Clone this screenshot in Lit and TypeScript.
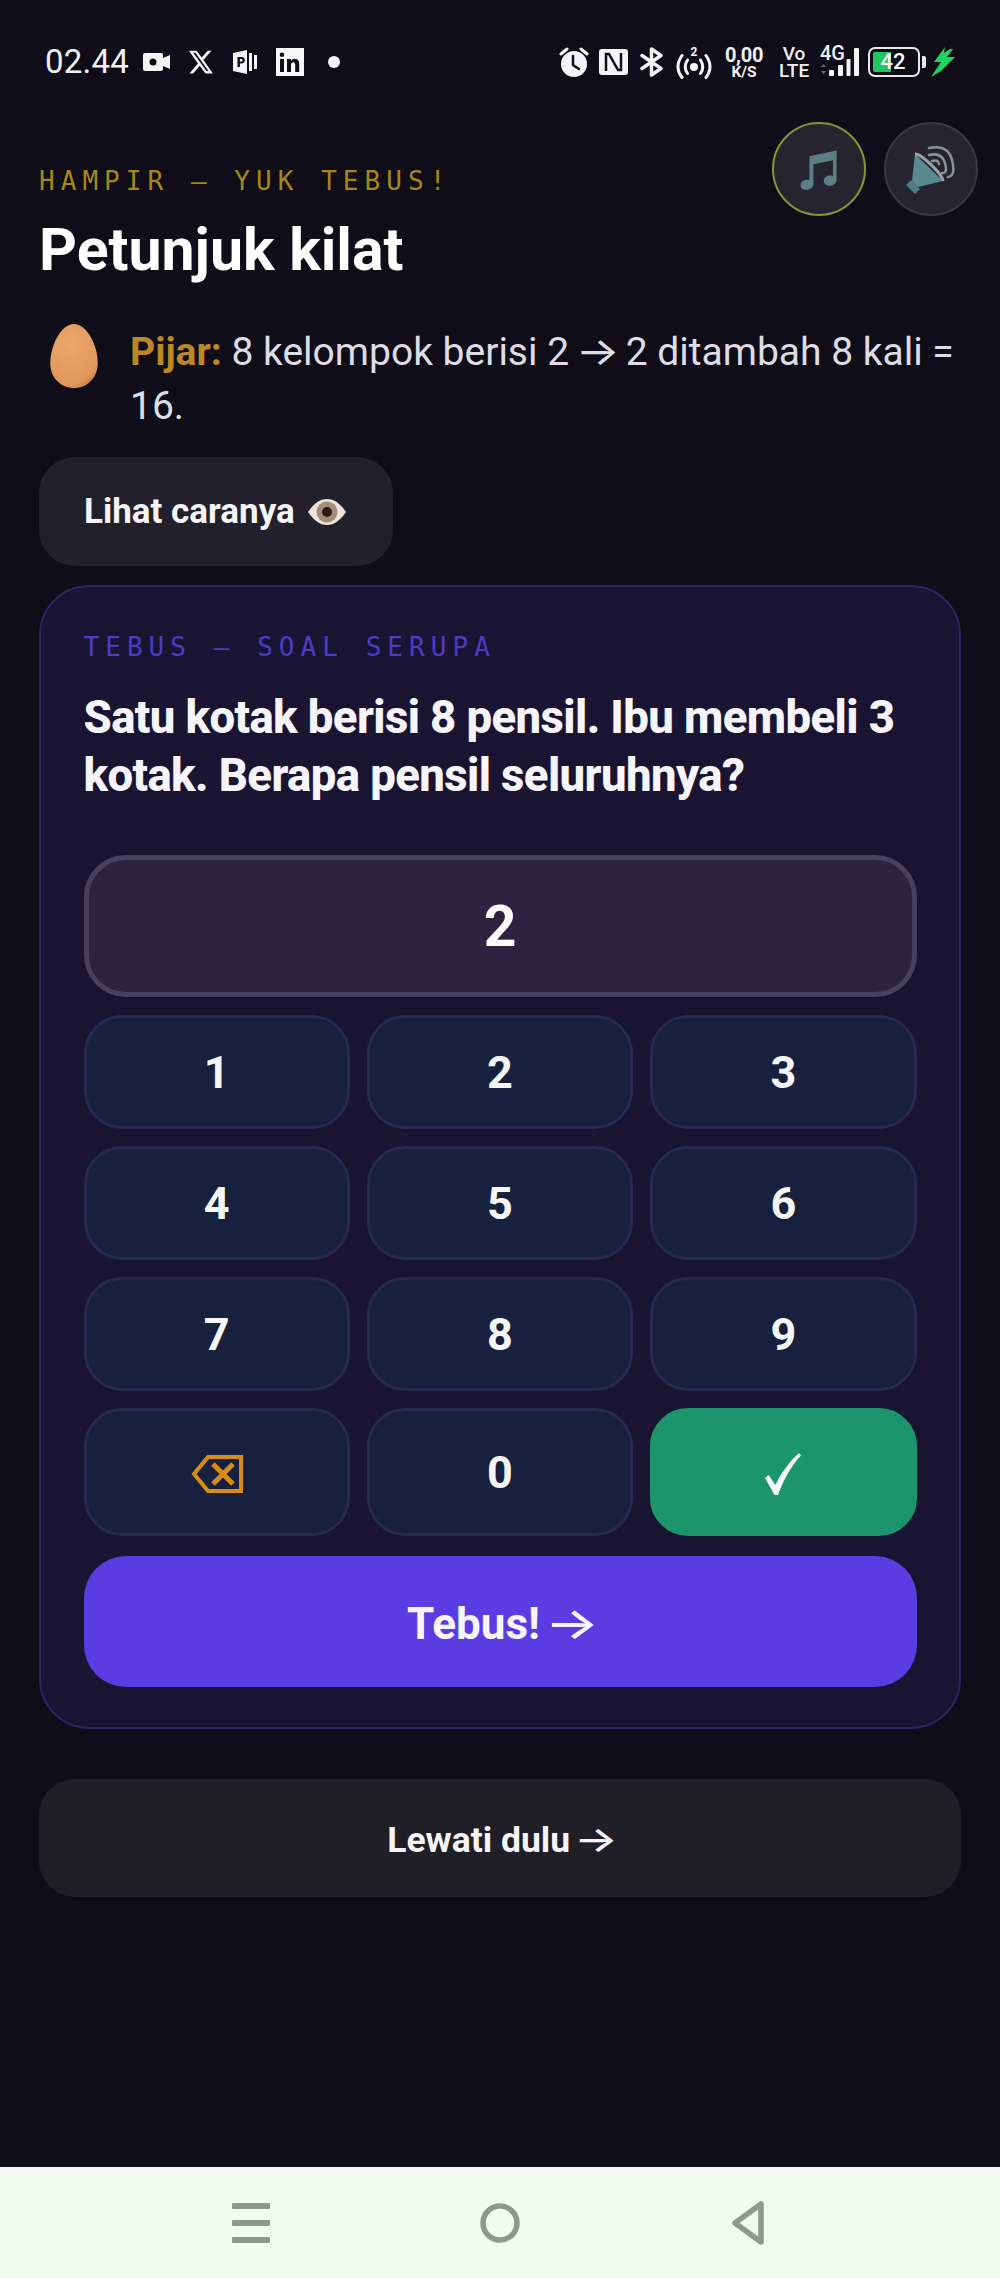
import { LitElement, html, css, svg } from "lit";
import { customElement } from "lit/decorators.js";

@customElement("app-root")
export class AppRoot extends LitElement {
  static styles = css`
    :host { display: flex; flex-direction: column; width: 1000px; height: 2278px; background: #0e0d18; font-family: Roboto, "Liberation Sans", sans-serif; color: #fff; position: relative; overflow: hidden; }
    * { box-sizing: border-box; }
    .status { height: 44px; margin-top: 40px; padding: 0 45px; display: flex; justify-content: space-between; align-items: center; flex: none; }
    .left, .right { display: flex; align-items: center; }
    .time { font-size: 33px; letter-spacing: 0.2px; color: #f1f1f5; margin-right: 14px; line-height: 44px; }
    .left svg, .right svg { display: block; flex: none; }
    .ml19 { margin-left: 19px; } .ml18 { margin-left: 18px; } .ml24 { margin-left: 24px; }
    .ml10 { margin-left: 10px; } .ml12 { margin-left: 12px; } .ml13 { margin-left: 13px; } .ml17 { margin-left: 17px; } .ml9 { margin-left: 9px; } .ml5 { margin-left: 5px; }
    .stack { display: flex; flex-direction: column; align-items: center; font-weight: 700; color: #f0f0f4; }
    .speed { width: 36px; line-height: 1; }
    .speed b { font-size: 20px; line-height: 20px; font-weight: 700; letter-spacing: -0.3px; }
    .speed span { font-size: 15.5px; line-height: 14px; }
    .volte { width: 30px; font-size: 19px; line-height: 17px; font-weight: 500; }
    .net { position: relative; width: 40px; height: 32px; }
    .net span { position: absolute; left: 1px; top: -2px; font-size: 20px; line-height: 18px; font-weight: 500; color: #f0f0f4; }
    .battery { width: 58px; height: 30px; display: flex; align-items: center; }
    .cell { position: relative; width: 52px; height: 30px; border: 2.5px solid #e8e8ea; border-radius: 7px; overflow: hidden; display: flex; align-items: center; justify-content: center; }
    .fill { position: absolute; left: 3px; top: 3px; bottom: 3px; width: 18px; background: #22c55e; border-radius: 2px 0 0 2px; }
    .level { position: relative; font-size: 22px; line-height: 1; font-weight: 500; padding-right: 2px; }
    .nub { width: 4px; height: 12px; margin-left: 2px; background: #e8e8ea; border-radius: 0 2px 2px 0; }

    .main { flex: 1; padding: 0 39px; display: flex; flex-direction: column; }
    .eyebrow { font-family: "DejaVu Sans Mono", monospace; text-transform: uppercase; font-size: 26px; letter-spacing: 6.05px; line-height: 32px; }
    .gold { color: #a8871a; margin-top: 81px; }
    h1 { margin: 21px 0 0; font-size: 59px; line-height: 64px; font-weight: 700; }
    .hint { display: flex; margin-top: 42px; gap: 32px; align-items: flex-start; padding-left: 11px; }
    .hint svg { flex: none; }
    .hint p { margin: 0; font-size: 39px; line-height: 54px; color: #dedde6; }
    .hint strong { color: #bd8823; font-weight: 700; }
    .ghost { align-self: flex-start; margin-top: 24px; height: 109px; width: 354px; padding-left: 45px; display: flex; align-items: center; gap: 12px; background: #22212b; border-radius: 36px; font-size: 35px; font-weight: 700; color: #f5f5f7; }
    .card { margin-top: 19px; height: 1144px; flex: none; background: #1a1433; border: 2.5px solid #2c2463; border-radius: 50px; padding: 0 42.5px; display: flex; flex-direction: column; }
    .purple { margin-top: 44px; color: #4b3cc4; }
    .q { margin: 26px 0 0; font-size: 45.5px; line-height: 58px; font-weight: 800; letter-spacing: -0.6px; color: #f6f5fb; }
    .display { margin-top: 50px; height: 142px; border: 5px solid #47405f; background: #2b2340; border-radius: 42px; display: flex; align-items: center; justify-content: center; font-size: 57px; font-weight: 700; flex: none; }
    .keys { display: grid; grid-template-columns: repeat(3, 1fr); grid-template-rows: 114px 114px 114px 128px; gap: 17px; margin-top: 18px; }
    .key { display: flex; align-items: center; justify-content: center; background: #17203c; border: 3px solid #272a4e; border-radius: 38px; font-size: 45px; font-weight: 700; color: #f6f6f9; }
    .key svg { margin-top: 4px; }
    .ok { background: #1d956c; border-color: #1d956c; }
    .submit { margin-top: 20px; padding-top: 3px; height: 131px; flex: none; background: #5a3de2; border-radius: 42px; display: flex; align-items: center; justify-content: center; font-size: 44px; font-weight: 700; color: #f7f5ff; }
    .skip { margin-top: 50px; padding-top: 2px; height: 118px; flex: none; background: #201f27; border-radius: 36px; display: flex; align-items: center; justify-content: center; font-size: 35.5px; font-weight: 700; color: #f5f5f7; }
    .arrow { display: inline-block; font-family: Inter, sans-serif; font-weight: 500; transform: scaleX(1.3); }
    .hint .arrow { font-weight: 400; transform: scaleX(1.18); }

    .audio { position: absolute; top: 122px; right: 22px; display: flex; gap: 18px; }
    .round { width: 94px; height: 94px; border-radius: 50%; background: #26252f; border: 2.5px solid #3a3943; display: flex; align-items: center; justify-content: center; }
    .round.on { border-color: #8d9138; }

    .nav { height: 111px; flex: none; background: #f0fdee; border-top: 10px solid #f5f7f0; margin-top: -1px; }
    .navitems { padding: 0 0 10px 232px; display: flex; align-items: center; height: 100%; }
    .navitems svg { display: block; flex: none; }
    .gap1 { margin-left: 210px; } .gap2 { margin-left: 211px; }
  `;

  private statusLeft() {
    return html`<div class="left">
      <span class="time">02.44</span>
      <svg width="27" height="20" viewBox="0 0 27 20"><path fill="#f4f4f6" fill-rule="evenodd" d="M2 1h16a2 2 0 0 1 2 2v3l7-3v14l-7-3v3a2 2 0 0 1-2 2H2a2 2 0 0 1-2-2V3a2 2 0 0 1 2-2zm8 5.500a3.500 3.500 0 1 0 0 7 3.500 3.500 0 0 0 0-7z"/></svg>
      <svg class="ml18" width="26" height="26" viewBox="0 0 24 24"><path fill="#f4f4f6" d="M18.200 1.500h3.400l-7.400 8.600L23 22.500h-6.800l-5.400-7-6.100 7H1.300l7.900-9.100L.9 1.500h7l4.800 6.400zM17 20.400h1.900L6.800 3.500h-2z"/></svg>
      <svg class="ml18" width="26" height="24" viewBox="0 0 26 24"><path fill="#f4f4f6" fill-rule="evenodd" d="M1 3l14-3v24L1 21zm4.500 4v10h2.400v-3.500h1.600c2 0 3.300-1.300 3.300-3.300S11.500 7 9.500 7zm2.400 2h1.300c.8 0 1.300.5 1.300 1.200s-.5 1.300-1.300 1.300H7.900z"/><rect x="17" y="3" width="3" height="18" fill="#f4f4f6"/><rect x="22" y="5" width="3" height="14" fill="#f4f4f6"/></svg>
      <svg class="ml18" width="28" height="28" viewBox="0 0 28 28"><path fill="#f8f8fa" fill-rule="evenodd" d="M0 0h28v28H0zm4 11v13h4V11zm2-6.500a2.300 2.300 0 1 0 0 4.600 2.300 2.300 0 0 0 0-4.600zM11 11v13h4v-7c0-1.800 1-2.700 2.200-2.700s2 .9 2 2.700v7h4v-8c0-3.400-1.900-5.300-4.500-5.300-1.600 0-3 .8-3.700 2V11z"/></svg>
      <svg class="ml24" width="12" height="12" viewBox="0 0 12 12"><circle cx="6" cy="6" r="6" fill="#f4f4f6"/></svg>
    </div>`;
  }

  private statusRight() {
    return html`<div class="right">
      <svg width="30" height="31" viewBox="0 0 30 31"><path fill="none" stroke="#f4f4f6" stroke-width="3" stroke-linecap="round" d="M2 7l6-5M28 7l-6-5"/><circle cx="15" cy="17" r="13" fill="#f4f4f6"/><path fill="none" stroke="#0e0d18" stroke-width="2.500" stroke-linecap="round" d="M14 9v9l6 4"/></svg>
      <svg class="ml10" width="29" height="26" viewBox="0 0 29 26"><rect width="29" height="26" rx="3" fill="#f4f4f6"/><path fill="none" stroke="#0e0d18" stroke-width="2.500" d="M7 22V5h3l9 16h3V4"/></svg>
      <svg class="ml12" width="23" height="30" viewBox="0 0 23 30"><path fill="none" stroke="#f4f4f6" stroke-width="3.500" stroke-linejoin="round" stroke-linecap="round" d="M2 8.500l19 13-9.500 6.500V2L21 8.500l-19 13"/></svg>
      <svg class="ml12" width="38" height="33" viewBox="0 0 38 33"><g fill="none" stroke="#f4f4f6" stroke-width="3" stroke-linecap="round"><path d="M7 9.500Q-1 21 7 31.500M31 9.500Q39 21 31 31.500M12.500 14Q8 21 12.500 27.500M25.500 14Q30 21 25.500 27.500"/></g><circle cx="19" cy="21" r="4" fill="#f4f4f6"/><text x="19" y="10" text-anchor="middle" font-family="Roboto" font-size="12" font-weight="700" fill="#f4f4f6">2</text></svg>
      <div class="stack speed ml13"><b>0,00</b><span>K/S</span></div>
      <div class="stack volte ml17"><span>Vo</span><span>LTE</span></div>
      <div class="net ml10"><span>4G</span>
        <svg width="40" height="32" viewBox="0 0 40 32"><path fill="#6a6a72" d="M2 21l2.500-3 2.500 3zM2 25l2.500 3 2.500-3z"/><g fill="#f4f4f6"><rect x="10" y="24" width="5" height="6" rx="1"/><rect x="19" y="19" width="5" height="11" rx="1"/><rect x="27.500" y="13" width="4" height="17" rx="1"/><rect x="35" y="2" width="5" height="28" rx="1"/></g></svg>
      </div>
      <div class="battery ml9"><div class="cell"><div class="fill"></div><span class="level">42</span></div><div class="nub"></div></div>
      <svg class="ml5" width="24" height="30" viewBox="0 0 24 30"><path fill="#22d45f" d="M14 0L3 15h7L0 30l10-6 14-14h-8l6-8h-3l-6 4z"/></svg>
    </div>`;
  }

  private egg() {
    return svg`<svg width="48" height="64" viewBox="0 0 46 62"><defs><radialGradient id="eg" cx="0.42" cy="0.3" r="0.8"><stop offset="0" stop-color="#eca76b"/><stop offset="0.8" stop-color="#e0985a"/><stop offset="1" stop-color="#b96f35"/></radialGradient></defs><path fill="url(#eg)" d="M23 0C35 0 46 20 46 38 46 52 36 62 23 62S0 52 0 38C0 20 11 0 23 0z"/></svg>`;
  }

  private eye() {
    return svg`<svg width="40" height="30" viewBox="0 0 40 30"><path fill="#ece6df" d="M1 15C8 5 14 2 20 2s12 3 19 13c-7 10-13 13-19 13S8 25 1 15z"/><circle cx="20" cy="15" r="10.500" fill="#a58c79"/><circle cx="20" cy="15" r="5" fill="#2c1d14"/></svg>`;
  }

  render() {
    return html`
      <div class="status">${this.statusLeft()}${this.statusRight()}</div>
      <div class="audio">
        <div class="round on">
          <svg width="40" height="46" viewBox="0 0 50 52"><path fill="#5b7f83" d="M13 10L47 3v36c0 5-4.500 8-9 8s-7-3-7-6.500 3.500-6.500 8-6.500c1.500 0 2.500.2 3.500.6V15L18 20v25c0 4.500-4.500 7-9 7s-7-2.500-7-6 3.500-6.500 8-6.500c1 0 2 .1 3 .5z"/></svg>
        </div>
        <div class="round">
          <svg width="52" height="52" viewBox="0 0 52 52"><g fill="none" stroke="#8b9298" stroke-width="2.500" stroke-linecap="round"><path d="M24 12Q37 9 40 20T37 30"/><path d="M24 5Q43 1 47 17T43 34"/><path d="M27 18Q33 16 34 21"/></g><path fill="#5a8a90" d="M10 11L38 38 13 44 7 38z"/><path fill="#4c7f86" d="M6 37l9 9-5 5-9-9z"/><path fill="none" stroke="#98a4a8" stroke-width="3" d="M10 11C16 10 38 32 38 38"/></svg>
        </div>
      </div>
      <main class="main">
        <div class="eyebrow gold">Hampir — yuk tebus!</div>
        <h1>Petunjuk kilat</h1>
        <div class="hint">
          ${this.egg()}
          <p><strong>Pijar:</strong> 8 kelompok berisi 2 <span class="arrow">→</span> 2 ditambah 8 kali = 16.</p>
        </div>
        <div class="ghost"><span>Lihat caranya</span>${this.eye()}</div>
        <section class="card">
          <div class="eyebrow purple">Tebus — soal serupa</div>
          <p class="q">Satu kotak berisi 8 pensil. Ibu membeli 3 kotak. Berapa pensil seluruhnya?</p>
          <div class="display">2</div>
          <div class="keys">
            ${["1", "2", "3", "4", "5", "6", "7", "8", "9"].map((k) => html`<div class="key">${k}</div>`)}
            <div class="key"><svg width="52" height="38" viewBox="0 0 52 38"><g fill="none" stroke="#d98c15" stroke-width="4"><path d="M50 2H17L3 19l14 17h33z"/><path d="M22 9l20 20M42 9L22 29" stroke-width="5"/></g></svg></div>
            <div class="key">0</div>
            <div class="key ok"><svg width="38" height="44" viewBox="0 0 38 44"><path fill="#f2fbf6" d="M1 26l3.500-3 7 10C17 21 25 10 35 1l2 2.500C27 14 20 27 14 43h-3.500z"/></svg></div>
          </div>
          <div class="submit"><span>Tebus! <span class="arrow">→</span></span></div>
        </section>
        <div class="skip"><span>Lewati dulu <span class="arrow">→</span></span></div>
      </main>
      <div class="nav">
        <div class="navitems">
          <svg width="38" height="40" viewBox="0 0 38 40"><g fill="#8e998c"><rect x="0" y="0" width="38" height="6" rx="1"/><rect x="0" y="17" width="38" height="6" rx="1"/><rect x="0" y="34" width="38" height="6" rx="1"/></g></svg>
          <svg class="gap1" width="40" height="40" viewBox="0 0 40 40"><circle cx="20" cy="20" r="17" fill="none" stroke="#8e998c" stroke-width="5.500"/></svg>
          <svg class="gap2" width="34" height="44" viewBox="0 0 34 44"><path fill="none" stroke="#8e998c" stroke-width="5.500" stroke-linejoin="round" d="M30 3v38L4 22z"/></svg>
        </div>
      </div>
    `;
  }
}
